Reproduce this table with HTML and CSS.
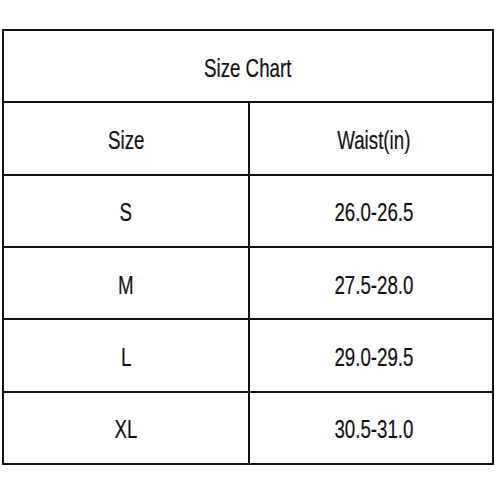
FILE: index.html
```html
<!DOCTYPE html>
<html>
<head>
<meta charset="utf-8">
<link rel="stylesheet" href="styles.css">
</head>
<body>
<div class="chart">
  <div class="cell title"><span class="txt">Size Chart</span></div>
  <div class="cell"><span class="txt">Size</span></div>
  <div class="cell right"><span class="txt">Waist(in)</span></div>
  <div class="cell"><span class="txt">S</span></div>
  <div class="cell right"><span class="txt">26.0-26.5</span></div>
  <div class="cell"><span class="txt">M</span></div>
  <div class="cell right"><span class="txt">27.5-28.0</span></div>
  <div class="cell"><span class="txt">L</span></div>
  <div class="cell right"><span class="txt">29.0-29.5</span></div>
  <div class="cell"><span class="txt">XL</span></div>
  <div class="cell right"><span class="txt">30.5-31.0</span></div>
</div>
</body>
</html>
```
FILE: styles.css
```css
html, body {
  margin: 0;
  padding: 0;
  background: #fff;
}
body {
  font-family: "Liberation Sans", Arial, sans-serif;
  color: #111;
}
.chart {
  margin: 29px 0 0 2px;
  width: 492px;
  height: 436px;
  box-sizing: border-box;
  border: 2px solid #111;
  background: #111;
  display: grid;
  grid-template-columns: 244px 242px;
  grid-template-rows: repeat(6, 1fr);
  gap: 2px;
}
.cell {
  background: #fff;
  display: flex;
  align-items: center;
  justify-content: center;
  padding-top: 3px;
}
.right {
  padding-left: 5px;
}
.title {
  grid-column: 1 / span 2;
}
.txt {
  display: inline-block;
  font-size: 26px;
  line-height: 1;
  transform: scaleX(0.72);
  white-space: nowrap;
  -webkit-text-stroke: 0.2px #111;
}
```
